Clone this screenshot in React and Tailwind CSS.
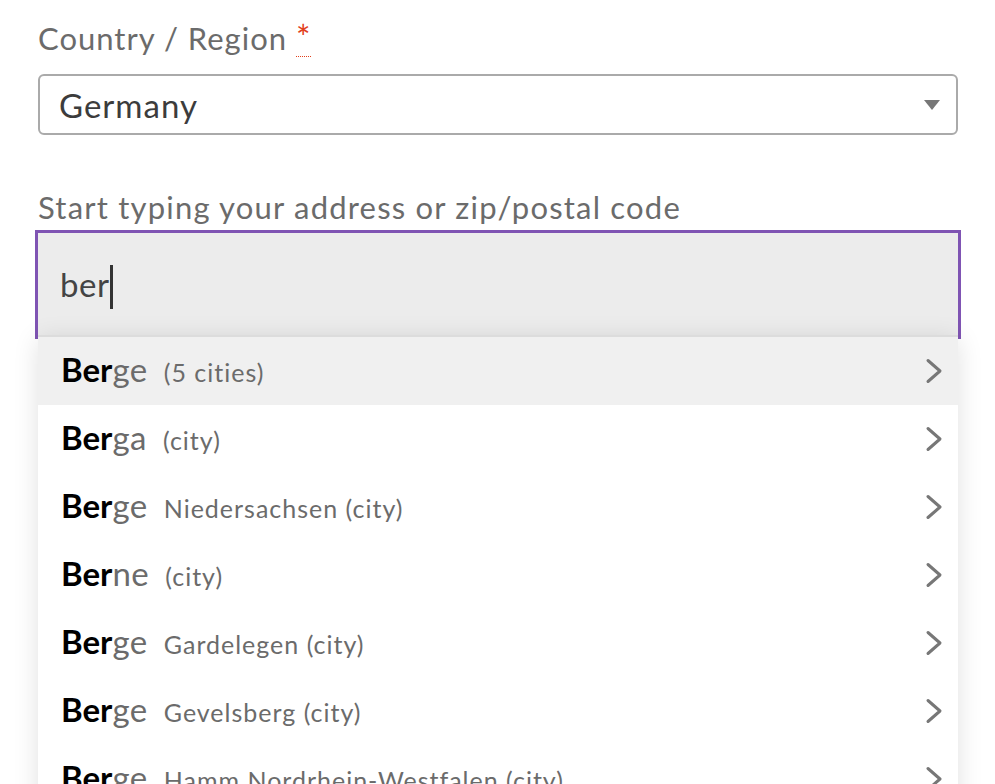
const results = [
  { rest: 'ge', detail: '(5 cities)', active: true },
  { rest: 'ga', detail: '(city)' },
  { rest: 'ge', detail: 'Niedersachsen (city)' },
  { rest: 'ne', detail: '(city)' },
  { rest: 'ge', detail: 'Gardelegen (city)' },
  { rest: 'ge', detail: 'Gevelsberg (city)' },
  { rest: 'ge', detail: 'Hamm Nordrhein-Westfalen (city)' },
];

const font = { fontFamily: 'Lato, "Noto Sans", sans-serif' };

function Chevron() {
  return (
    <svg width="18" height="26" viewBox="0 0 18 26" fill="none">
      <path d="M3 2.5l12 10.5L3 23.5" stroke="#777" strokeWidth="3" strokeLinecap="round" strokeLinejoin="round" />
    </svg>
  );
}

export default function App() {
  return (
    <div className="h-[784px] overflow-hidden bg-white pl-[38px] pr-[37px] pt-[17px]" style={font}>
      {/* Country select */}
      <label className="block h-[42px] text-[31px] leading-[42px] tracking-[1px] text-[#6b6b6b]">
        Country / Region{' '}
        <span className="text-[34px] leading-[0] text-[#e2401c] underline decoration-dotted decoration-1 underline-offset-[6px]">*</span>
      </label>
      <div className="mt-[15px] flex h-[61px] items-center justify-between rounded-[6px] border-2 border-[#aaaaaa] pl-[19px] pr-[16px]">
        <span className="mt-[3px] text-[33px] tracking-[1px] text-[#3c3c3c]">Germany</span>
        <svg width="16" height="10" viewBox="0 0 16 10">
          <path d="M0 0h16L8 10z" fill="#777" />
        </svg>
      </div>

      {/* Address search */}
      <label className="mt-[51px] block text-[31px] leading-[42px] tracking-[1.2px] text-[#6b6b6b]">
        Start typing your address or zip/postal code
      </label>
      <div className="relative -mx-[3px] mt-[2px]">
        <div className="flex h-[109px] items-start border-[3px] border-b-0 border-[#7f54b3] bg-[#ececec] pl-[22px] pt-[31px]">
          <span className="text-[33px] leading-[40px] tracking-[0.5px] text-[#444]">ber</span>
          <span className="ml-[1px] mt-[1px] h-[44px] w-[3px] bg-[#333]" />
        </div>
        {/* Suggestions menu */}
        <ul className="absolute left-[3px] right-[3px] top-[105px] border-t-2 border-[#dcdcdc] bg-white shadow-[0_4px_24px_rgba(0,0,0,0.12)]">
          {results.map((r, i) => (
            <li
              key={i}
              className={`flex h-[68px] items-center justify-between pl-[23px] pr-[15px] ${r.active ? 'bg-[#f0f0f0]' : ''}`}
            >
              <div className="-mt-[3px] flex items-baseline">
                <span className="text-[33px] font-bold text-black">Ber</span>
                <span className="text-[33px] tracking-[0.5px] text-[#6b6b6b]">{r.rest}</span>
                <span className="ml-[16px] text-[25px] tracking-[1px] text-[#6b6b6b]">{r.detail}</span>
              </div>
              <Chevron />
            </li>
          ))}
        </ul>
      </div>
    </div>
  );
}
